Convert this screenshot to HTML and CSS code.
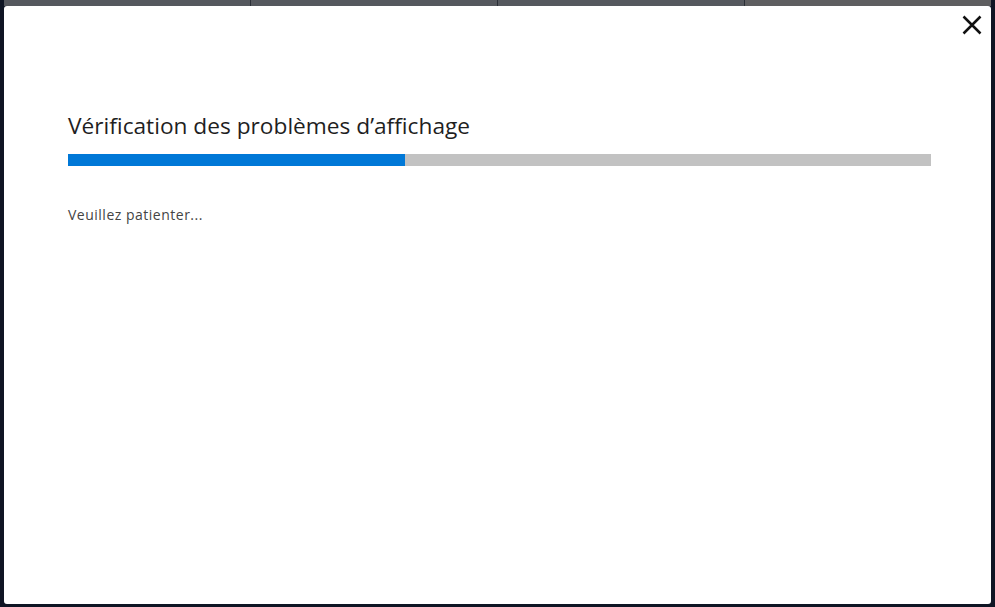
FILE: index.html
```html
<!DOCTYPE html>
<html lang="fr">
<head>
<meta charset="utf-8">
<title>Vérification des problèmes d'affichage</title>
<link rel="stylesheet" href="styles.css">
</head>
<body>
<div class="tabs">
  <div class="tab"></div>
  <div class="tab"></div>
  <div class="tab"></div>
  <div class="tab tab-last"></div>
</div>
<div class="dialog">
  <button class="close" aria-label="Fermer">
    <svg width="20" height="20" viewBox="0 0 20 20"><path d="M1.5 1.5 L18.5 18.5 M18.5 1.5 L1.5 18.5" stroke="#111" stroke-width="2.5" fill="none"/></svg>
  </button>
  <h1 class="title">Vérification des problèmes d’affichage</h1>
  <div class="progress"><div class="progress-fill" style="width:39.1%"></div></div>
  <p class="status">Veuillez patienter...</p>
</div>
</body>
</html>
```
FILE: styles.css
```css
html, body {
  margin: 0;
  height: 100%;
}
body {
  background: #0f1524;
  padding: 0 4px 3px 4px;
  box-sizing: border-box;
  display: flex;
  flex-direction: column;
  font-family: "Open Sans", "Noto Sans", sans-serif;
  overflow: hidden;
}
.tabs {
  height: 6px;
  display: flex;
  flex: none;
}
.tab {
  flex: 1;
  background: #55585e;
  border-right: 1px solid #2b2f37;
}
.tab-last {
  background: #5e5e60;
  border-right: none;
}
.dialog {
  flex: 1;
  background: #fff;
  border-radius: 3px;
  position: relative;
  padding: 0 60px 0 64px;
}
.close {
  position: absolute;
  top: 9px;
  right: 9px;
  width: 20px;
  height: 20px;
  padding: 0;
  border: 0;
  background: none;
  display: flex;
}
.title {
  margin: 104px 0 0 0;
  font-size: 22.7px;
  font-weight: 400;
  color: #1f1f1f;
  line-height: 31px;
  letter-spacing: 0;
}
.progress {
  margin-top: 13px;
  height: 12px;
  background: #c2c2c2;
}
.progress-fill {
  height: 100%;
  background: #0078d7;
}
.status {
  margin: 40px 0 0 0;
  font-size: 14px;
  color: #444;
  line-height: 18px;
  letter-spacing: 0.5px;
}
```
